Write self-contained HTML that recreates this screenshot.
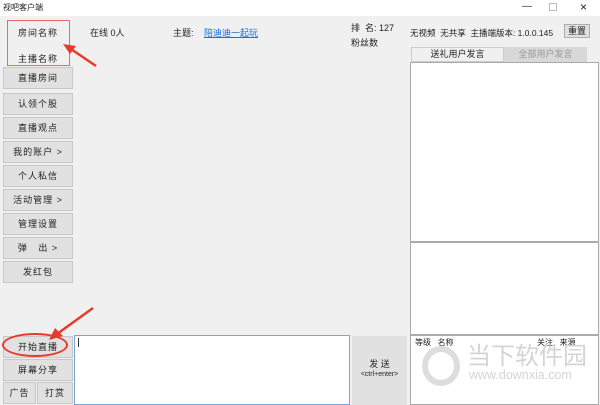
<!DOCTYPE html>
<html><head><meta charset="utf-8"><style>
*{margin:0;padding:0;box-sizing:border-box}
body{width:600px;height:405px;overflow:hidden;background:#f0f0f0;font-family:"Liberation Sans","Noto Sans CJK SC",sans-serif;font-size:9px;color:#222;position:relative}
.a{position:absolute}
.btn{position:absolute;left:3px;width:70px;height:22px;background:#e1e1e1;border:1px solid #c8c8c8;text-align:center;line-height:20px;font-size:9px;letter-spacing:1px}
.box{position:absolute;background:#fff;border:1px solid #aaa}
</style></head><body>
<div class="a" style="left:0;top:0;width:600px;height:16px;background:#fff"></div>
<div class="a" style="left:3px;top:2px;font-size:8px">视吧客户端</div>
<div class="a" style="left:522px;top:1px;font-size:10px;color:#333">&#8212;</div>
<div class="a" style="left:549px;top:3px;width:8px;height:8px;border:1px solid #bbb"></div>
<div class="a" style="left:580px;top:0;font-size:12px">×</div>

<div class="a" style="left:7px;top:20px;width:63px;height:46px;border:1px solid #e86a6a"></div>
<div class="a" style="left:18px;top:26px;font-size:9px;letter-spacing:1px">房间名称</div>
<div class="a" style="left:18px;top:52px;font-size:9px;letter-spacing:1px">主播名称</div>
<svg class="a" style="left:60px;top:40px" width="45" height="30"><path d="M36 26 L8 7" stroke="#e83a2a" stroke-width="2.5"/><path d="M3 4 L16 6 L10 14 Z" fill="#e83a2a"/></svg>
<div class="a" style="left:90px;top:26px">在线 0人</div>
<div class="a" style="left:173px;top:26px">主题:</div>
<div class="a" style="left:204px;top:26px;color:#1a6fd8;text-decoration:underline">陪迪迪一起玩</div>
<div class="a" style="left:351px;top:21px">排 &nbsp;名: 127</div>
<div class="a" style="left:351px;top:36px">粉丝数</div>
<div class="a" style="left:410px;top:27px;font-size:8.5px;white-space:nowrap">无视频 &nbsp;无共享 &nbsp;主播端版本: 1.0.0.145</div>
<div class="a" style="left:564px;top:24px;width:26px;height:14px;background:#e1e1e1;border:1px solid #adadad;text-align:center;line-height:12px">重置</div>

<div class="a" style="left:411px;top:47px;width:93px;height:15px;background:#f0f0f0;border:1px solid #ccc;text-align:center;line-height:13px">送礼用户发言</div>
<div class="a" style="left:504px;top:47px;width:83px;height:15px;background:#d8d8d8;color:#999;text-align:center;line-height:14px">全部用户发言</div>
<div class="box" style="left:410px;top:62px;width:189px;height:180px"></div>
<div class="box" style="left:410px;top:242px;width:189px;height:93px"></div>
<div class="box" style="left:410px;top:335px;width:189px;height:70px"></div>
<div class="a" style="left:415px;top:337px;font-size:8px">等级 &nbsp;&nbsp;名称</div>
<div class="a" style="left:537px;top:337px;font-size:8px">关注 &nbsp;&nbsp;来源</div>
<div class="a" style="left:467px;top:336px;font-size:24px;color:#d4d4d4">当下软件园</div>
<div class="a" style="left:469px;top:368px;font-size:12.5px;color:#d4d4d4">www.downxia.com</div>
<div class="a" style="left:422px;top:346px;width:38px;height:40px;border:6px solid #ddd;border-radius:50%"></div>

<div class="btn" style="top:67px">直播房间</div>
<div class="btn" style="top:93px">认领个股</div>
<div class="btn" style="top:117px">直播观点</div>
<div class="btn" style="top:141px">我的账户 &gt;</div>
<div class="btn" style="top:165px">个人私信</div>
<div class="btn" style="top:189px">活动管理 &gt;</div>
<div class="btn" style="top:213px">管理设置</div>
<div class="btn" style="top:237px">弹 &nbsp;&nbsp;出 &gt;</div>
<div class="btn" style="top:261px">发红包</div>

<div class="btn" style="top:336px">开始直播</div>
<div class="btn" style="top:359px">屏幕分享</div>
<div class="btn" style="top:382px;width:33px">广告</div>
<div class="btn" style="top:382px;left:37px;width:36px">打赏</div>
<div class="a" style="left:2px;top:333px;width:66px;height:24px;border:2px solid #e83a2a;border-radius:50%"></div>
<svg class="a" style="left:45px;top:306px" width="50" height="40"><path d="M48 2 L12 28" stroke="#e83a2a" stroke-width="2.5"/><path d="M4 34 L10 22 L18 30 Z" fill="#e83a2a"/></svg>

<div class="a" style="left:74px;top:335px;width:276px;height:70px;background:#fff;border:1px solid #7aa7d8"></div>
<div class="a" style="left:78px;top:338px;width:1px;height:9px;background:#333"></div>
<div class="a" style="left:352px;top:336px;width:55px;height:69px;background:#e1e1e1;text-align:center;padding-top:24px;line-height:9px">发 送<br><span style="font-size:7px">&lt;ctrl+enter&gt;</span></div>
</body></html>
